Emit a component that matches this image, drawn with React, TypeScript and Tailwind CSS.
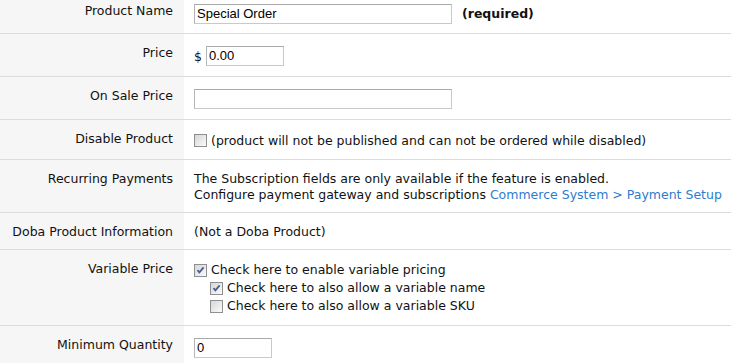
import { ReactNode } from "react";

const font = { fontFamily: '"DejaVu Sans", Verdana, sans-serif' };

const Check = ({ checked }: { checked?: boolean }) => (
  <span className="relative inline-block w-[13px] h-[13px] shrink-0 border border-[#8e8f8f] bg-gradient-to-br from-[#d6d6d6] to-[#fbfbfb]">
    {checked && (
      <svg viewBox="0 0 11 11" className="absolute left-0 top-0 w-[11px] h-[11px]">
        <path d="M2.5 5.2 L4.4 7.4 L8.6 2.4" fill="none" stroke="#4a5f97" strokeWidth="1.8" />
      </svg>
    )}
  </span>
);

const Input = ({ value, w }: { value?: string; w: string }) => (
  <div
    className={`${w} h-[20px] my-[1px] shrink-0 border border-[#c9c9c9] border-t-[#a9a9a9] border-l-[#b5b5b5] bg-white px-[2px] text-[13px] leading-[18px] text-black`}
    style={{ fontFamily: '"Liberation Sans", Arial, sans-serif' }}
  >
    {value}
  </div>
);

const Row = ({
  label,
  children,
  first,
  pb = "pb-[9px]",
}: {
  label: string;
  children: ReactNode;
  first?: boolean;
  pb?: string;
}) => (
  <div className="flex border-b border-[#dcdcdc]">
    <div
      className={`w-[184px] shrink-0 bg-[#f6f6f6] text-right pr-[11px] ${first ? "pt-[3px]" : "pt-[11px]"} ${pb}`}
    >
      {label}
    </div>
    <div className={`flex-1 pl-[10px] ${first ? "pt-[3px]" : "pt-[11px]"} ${pb}`}>{children}</div>
  </div>
);

export default function App() {
  return (
    <div className="w-[731px] h-[363px] overflow-hidden bg-white text-[12.5px] leading-[16px] text-[#111]" style={font}>
      <Row label="Product Name" first pb="pb-[8px]">
        <div className="flex items-start">
          <Input w="w-[258px]" value="Special Order" />
          <span className="ml-[10px] mt-[3px] font-bold">(required)</span>
        </div>
      </Row>
      <Row label="Price">
        <div className="flex items-start">
          <span className="mt-[4px] mr-[4px]">$</span>
          <Input w="w-[78px]" value="0.00" />
        </div>
      </Row>
      <Row label="On Sale Price">
        <Input w="w-[258px]" />
      </Row>
      <Row label="Disable Product">
        <div className="flex items-center h-[19px] gap-[4px]">
          <Check />
          <span>(product will not be published and can not be ordered while disabled)</span>
        </div>
      </Row>
      <Row label="Recurring Payments">
        <div>The Subscription fields are only available if the feature is enabled.</div>
        <div>
          Configure payment gateway and subscriptions{" "}
          <a href="#" className="text-[#2e7bcf]">
            Commerce System &gt; Payment Setup
          </a>
        </div>
      </Row>
      <Row label="Doba Product Information">(Not a Doba Product)</Row>
      <Row label="Variable Price" pb="pb-[10px]">
        <div className="flex items-center h-[18px] gap-[4px]">
          <Check checked />
          <span>Check here to enable variable pricing</span>
        </div>
        <div className="flex items-center h-[18px] gap-[4px] pl-[16px]">
          <Check checked />
          <span>Check here to also allow a variable name</span>
        </div>
        <div className="flex items-center h-[18px] gap-[4px] pl-[16px]">
          <Check />
          <span>Check here to also allow a variable SKU</span>
        </div>
      </Row>
      <Row label="Minimum Quantity">
        <Input w="w-[78px]" value="0" />
      </Row>
    </div>
  );
}
